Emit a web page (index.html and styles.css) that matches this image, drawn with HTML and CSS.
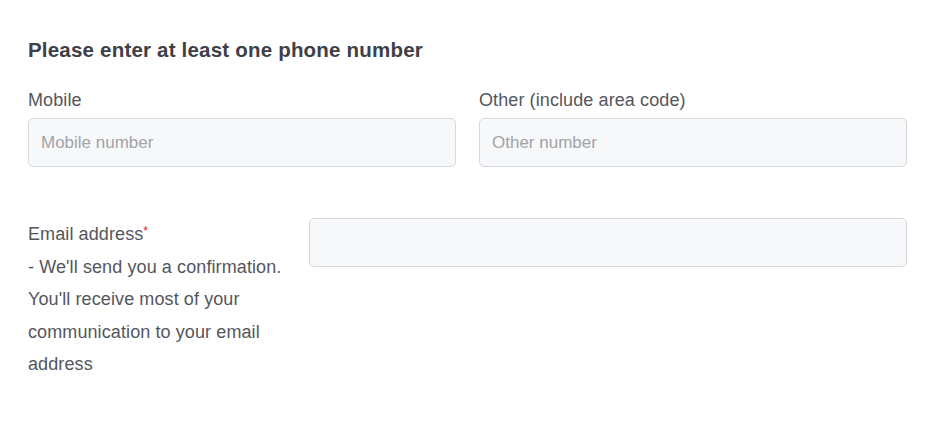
FILE: index.html
```html
<!DOCTYPE html>
<html lang="en">
<head>
    <meta charset="UTF-8">
    <meta name="viewport" content="width=device-width, initial-scale=1.0">
    <title>Contact details</title>
    <link rel="stylesheet" href="styles.css">
</head>
<body>

    <div class="form">
        <h2>Please enter at least one phone number</h2>

        <div class="phone-row">
            <div class="field">
                <label for="mobile">Mobile</label>
                <input type="text" id="mobile" placeholder="Mobile number">
            </div>
            <div class="field">
                <label for="other">Other (include area code)</label>
                <input type="text" id="other" placeholder="Other number">
            </div>
        </div>

        <div class="email-row">
            <label for="email" class="email-label">
                Email address<span class="required">*</span><br>
                - We'll send you a confirmation. You'll receive most of your communication to your email address
            </label>
            <input type="email" id="email">
        </div>
    </div>

</body>
</html>
```

FILE: styles.css
```css
body {
    font-family: "Liberation Sans", Arial, sans-serif;
    background-color: #fff;
    margin: 0;
}

.form {
    padding: 38px 32px 0 28px;
}

.form h2 {
    margin: 0;
    font-size: 20.5px;
    line-height: 24px;
    letter-spacing: 0.2px;
    font-weight: bold;
    color: #3e4047;
}

.phone-row {
    display: grid;
    grid-template-columns: 1fr 1fr;
    column-gap: 23px;
    margin-top: 26px;
}

.field label {
    display: block;
    font-size: 18px;
    line-height: 24px;
    letter-spacing: 0.1px;
    color: #54565d;
    margin-bottom: 6px;
}

.form input {
    display: block;
    width: 100%;
    box-sizing: border-box;
    height: 49px;
    padding: 0 12px;
    background-color: #f7f8fa;
    border: 1px solid #d6d9dd;
    border-radius: 5px;
    font-family: inherit;
    font-size: 17px;
    color: #333;
}

.form input::placeholder {
    color: #a2a3a8;
}

.email-row {
    display: grid;
    grid-template-columns: 258px 1fr;
    column-gap: 23px;
    align-items: start;
    margin-top: 51px;
}

.email-label {
    font-size: 18px;
    line-height: 32.5px;
    letter-spacing: 0.1px;
    color: #54565d;
}

.required {
    color: #e0141e;
    font-size: 12px;
    vertical-align: top;
    line-height: 26px;
}
```
